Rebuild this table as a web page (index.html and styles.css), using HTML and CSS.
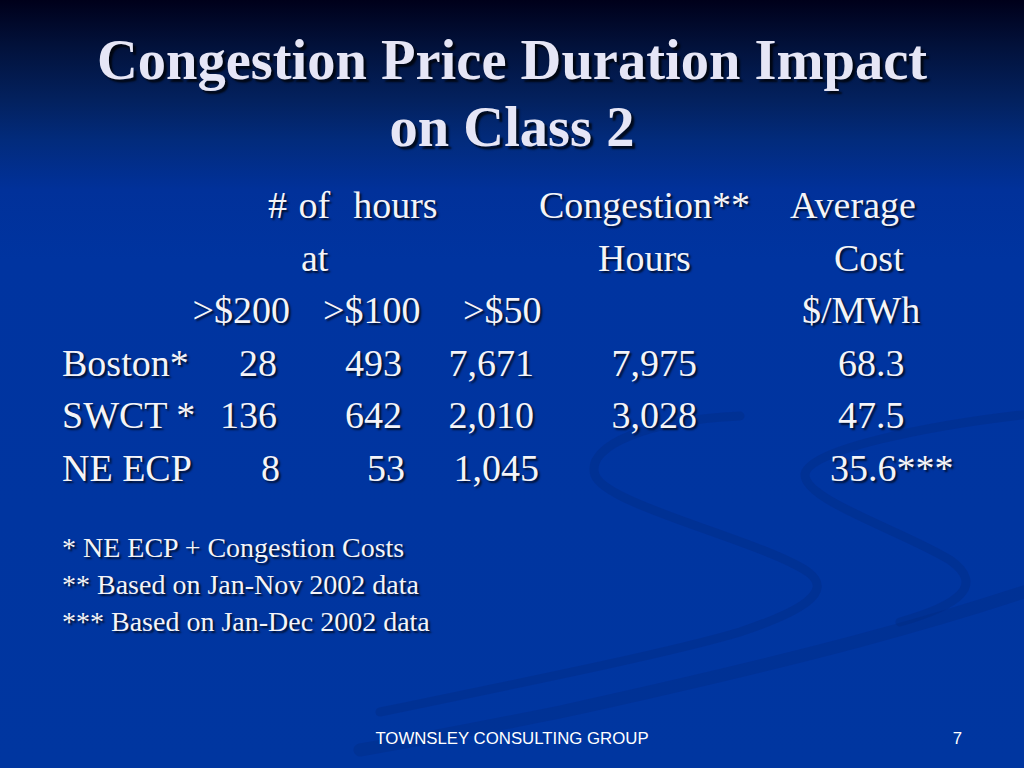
FILE: index.html
```html
<!DOCTYPE html>
<html lang="en">
<head>
<meta charset="utf-8">
<title>Congestion Price Duration Impact on Class 2</title>
<link rel="stylesheet" href="styles.css">
</head>
<body>
<div class="slide">
  <svg class="swoosh" width="1024" height="768" viewBox="0 0 1024 768" aria-hidden="true">
    <g fill="none" stroke="#00277a" stroke-linecap="round">
      <path class="sw-a" d="M 740 416 C 650 420, 585 445, 595 475 C 605 505, 760 540, 808 572 C 835 592, 800 612, 740 632 C 680 650, 560 675, 380 712"/>
      <path class="sw-b" d="M 1030 414 C 930 425, 805 450, 805 475 C 805 500, 900 530, 950 560 C 985 585, 960 605, 900 622"/>
      <path class="sw-c" d="M 1030 590 C 940 620, 820 655, 560 712 C 480 728, 420 740, 360 750"/>
    </g>
  </svg>

  <h1 class="title">Congestion Price Duration Impact<br>on Class 2</h1>

  <div class="table">
    <div class="row">
      <span class="h-hours">#&nbsp;of&nbsp; hours</span>
      <span class="h-cong">Congestion**</span>
      <span class="h-avg">Average</span>
    </div>
    <div class="row">
      <span class="h-at">at</span>
      <span class="h-hrs">Hours</span>
      <span class="h-cost">Cost</span>
    </div>
    <div class="row">
      <span class="h-200">&gt;$200</span>
      <span class="h-100">&gt;$100</span>
      <span class="h-50">&gt;$50</span>
      <span class="h-unit">$/MWh</span>
    </div>
    <div class="row">
      <span class="ca">Boston*</span>
      <span class="cb">28</span>
      <span class="cc">493</span>
      <span class="cd">7,671</span>
      <span class="ce">7,975</span>
      <span class="cf">68.3</span>
    </div>
    <div class="row">
      <span class="ca">SWCT *</span>
      <span class="cb">136</span>
      <span class="cc">642</span>
      <span class="cd">2,010</span>
      <span class="ce">3,028</span>
      <span class="cf">47.5</span>
    </div>
    <div class="row ne">
      <span class="ca">NE ECP</span>
      <span class="cb">8</span>
      <span class="cc">53</span>
      <span class="cd">1,045</span>
      <span class="cf">35.6***</span>
    </div>
  </div>

  <ul class="notes">
    <li>* NE ECP + Congestion Costs</li>
    <li>** Based on Jan-Nov 2002 data</li>
    <li>*** Based on Jan-Dec 2002 data</li>
  </ul>

  <footer class="foot">
    <span class="foot-text">TOWNSLEY CONSULTING GROUP</span>
    <span class="page-num">7</span>
  </footer>
</div>
</body>
</html>
```

FILE: styles.css
```css
html, body {
  margin: 0;
  padding: 0;
}

body {
  width: 1024px;
  height: 768px;
  overflow: hidden;
  background: #0036a0;
}

.slide {
  position: relative;
  width: 1024px;
  height: 768px;
  display: flex;
  flex-direction: column;
  background: linear-gradient(to bottom,
    #00001a 0px,
    #02113a 45px,
    #03215e 100px,
    #022b7c 140px,
    #01319a 190px,
    #0034a0 260px,
    #0036a0 768px);
  font-family: "Liberation Serif", "Times New Roman", serif;
  color: #f4f4f8;
}

.swoosh {
  position: absolute;
  left: 0;
  top: 0;
  z-index: 0;
}

.sw-a {
  stroke-width: 9;
  opacity: 0.3;
}

.sw-b {
  stroke-width: 9;
  opacity: 0.3;
}

.sw-c {
  stroke-width: 13;
  opacity: 0.28;
}

.title,
.table,
.notes,
.foot {
  position: relative;
  z-index: 1;
}

.title {
  margin: 0;
  padding-top: 27px;
  font-size: 56.5px;
  line-height: 67px;
  font-weight: bold;
  text-align: center;
  color: #e6e6f6;
  text-shadow: 3px 3px 2px rgba(0, 0, 0, 0.75);
}

.table {
  margin-top: 18px;
  padding-left: 62px;
  font-size: 38px;
  line-height: 52.6px;
  text-shadow: 2px 2px 2px rgba(0, 0, 0, 0.7);
}

.row {
  display: grid;
  grid-template-columns: 138px 90px 122px 127px 181px 1fr;
  height: 52.6px;
  white-space: nowrap;
}

.row > span {
  grid-row: 1;
}

/* header rows */
.h-hours { grid-column: 2 / 5; margin-left: 68px; word-spacing: 2px; }
.h-cong  { grid-column: 5; }
.h-avg   { grid-column: 6; margin-left: 70px; }
.h-at    { grid-column: 2 / 4; margin-left: 101px; }
.h-hrs   { grid-column: 5; margin-left: 59px; }
.h-cost  { grid-column: 6; margin-left: 114px; }
.h-200   { grid-column: 2; justify-self: end; }
.h-100   { grid-column: 3; margin-left: 33px; }
.h-50    { grid-column: 4; margin-left: 51px; }
.h-unit  { grid-column: 6; margin-left: 82px; }

/* data rows */
.ca { grid-column: 1; }
.cb { grid-column: 2; justify-self: end; padding-right: 13px; }
.cc { grid-column: 3; justify-self: end; padding-right: 10px; }
.cd { grid-column: 4; justify-self: end; padding-right: 5px; }
.ce { grid-column: 5; justify-self: end; padding-right: 23px; }
.cf { grid-column: 6; padding-left: 118px; }

.ne .cb { padding-right: 10px; }
.ne .cc { padding-right: 7px; }
.ne .cd { padding-right: 0; }
.ne .cf { padding-left: 110px; }

.notes {
  list-style: none;
  margin: 34px 0 0 0;
  padding-left: 62px;
  font-size: 28px;
  line-height: 37px;
  text-shadow: 2px 2px 2px rgba(0, 0, 0, 0.7);
}

.foot {
  margin-top: auto;
  margin-bottom: 19px;
  display: grid;
  grid-template-columns: 1fr auto 1fr;
  align-items: center;
  font-family: "Liberation Sans", Arial, sans-serif;
  font-size: 16.8px;
  line-height: 20px;
  color: #ffffff;
}

.foot-text {
  grid-column: 2;
}

.page-num {
  grid-column: 3;
  justify-self: end;
  padding-right: 62px;
}
```
